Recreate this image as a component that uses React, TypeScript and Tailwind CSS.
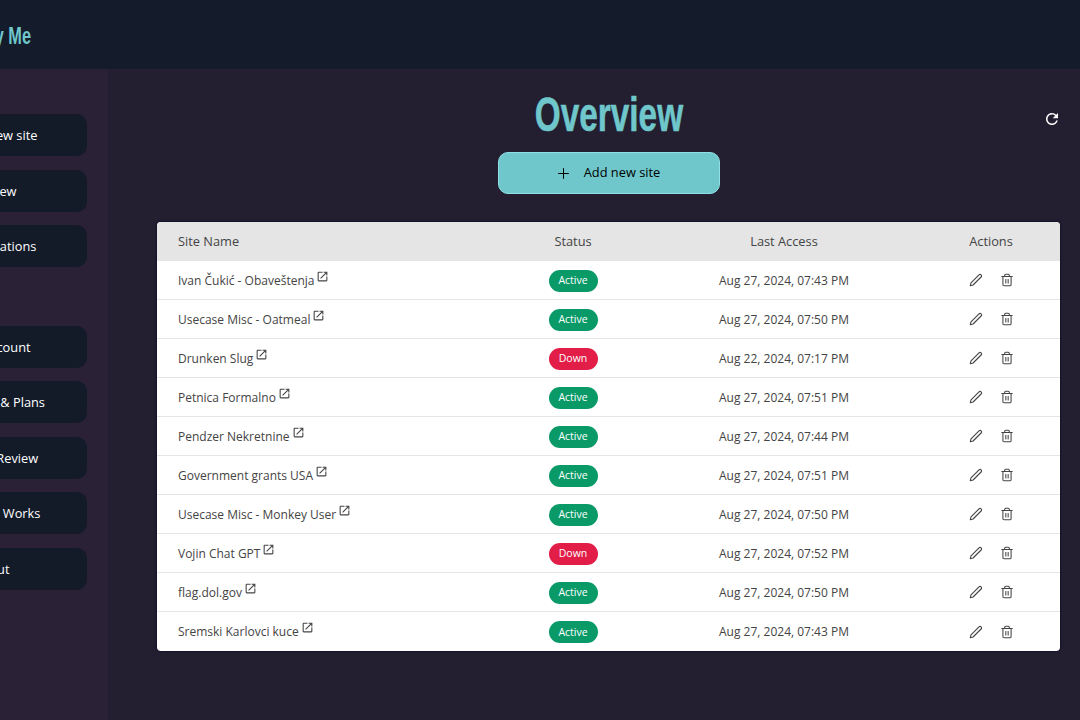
import { Plus, Trash2 } from "lucide-react"
import { MdOpenInNew, MdRefresh } from "react-icons/md"

const menuTop = ["Add new site", "Overview", "Notifications"]
const menuBottom = ["My Account", "Billing & Plans", "Write Review", "How It Works", "Sign out"]

const sites = [
    { name: "Ivan Čukić - Obaveštenja", status: "Active", access: "Aug 27, 2024, 07:43 PM" },
    { name: "Usecase Misc - Oatmeal", status: "Active", access: "Aug 27, 2024, 07:50 PM" },
    { name: "Drunken Slug", status: "Down", access: "Aug 22, 2024, 07:17 PM" },
    { name: "Petnica Formalno", status: "Active", access: "Aug 27, 2024, 07:51 PM" },
    { name: "Pendzer Nekretnine", status: "Active", access: "Aug 27, 2024, 07:44 PM" },
    { name: "Government grants USA", status: "Active", access: "Aug 27, 2024, 07:51 PM" },
    { name: "Usecase Misc - Monkey User", status: "Active", access: "Aug 27, 2024, 07:50 PM" },
    { name: "Vojin Chat GPT", status: "Down", access: "Aug 27, 2024, 07:52 PM" },
    { name: "flag.dol.gov", status: "Active", access: "Aug 27, 2024, 07:50 PM" },
    { name: "Sremski Karlovci kuce", status: "Active", access: "Aug 27, 2024, 07:43 PM" },
]

function MenuButton({ label }: { label: string }) {
    return (
        <button className="flex h-[42px] w-full items-center rounded-[10px] bg-[#131b29] pl-[113px] pt-[2px] text-[12.8px] text-white">
            {label}
        </button>
    )
}

function PencilIcon() {
    return (
        <svg width="14" height="14" viewBox="0 0 14 14" fill="none" stroke="currentColor" strokeWidth="1.1" strokeLinejoin="round">
            <path d="M1.3 12.7 L2 9.9 L10 1.9 C10.7 1.2 11.5 1.2 12.1 1.9 C12.8 2.5 12.8 3.3 12.1 4 L4.1 12 Z" />
        </svg>
    )
}

export default function App() {
    return (
        <div className="h-[720px] w-[1080px] overflow-hidden bg-[#231e30] font-['Open_Sans',sans-serif]">
            <div className="-ml-[192px] flex h-full w-[1272px] flex-col">
                <header className="flex h-[69px] shrink-0 items-center justify-end bg-[#141b2a] pr-[1049px] pt-[3px]">
                    <span className="origin-right scale-x-[0.68] font-['Liberation_Sans',sans-serif] text-[24px] font-bold whitespace-nowrap text-[#6fc7cb]">Notify Me</span>
                </header>
                <div className="flex flex-1">
                    <aside className="flex w-[300px] shrink-0 flex-col gap-[13.5px] bg-[#2a2136] pl-[40px] pr-[21px] pt-[45px]">
                        {menuTop.map((m) => <MenuButton key={m} label={m} />)}
                        <div className="h-[31.5px]" />
                        {menuBottom.map((m) => <MenuButton key={m} label={m} />)}
                    </aside>
                    <main className="relative flex flex-1 flex-col items-center pl-[49px] pr-[20px]">
                        <h1 className="mt-[19px] scale-x-[0.68] font-['Liberation_Sans',sans-serif] text-[49px] font-bold leading-[52px] text-[#6fc7cb] [-webkit-text-stroke:0.6px_#6fc7cb]">Overview</h1>
                        <button className="mt-[12px] flex h-[42px] w-[222px] items-center justify-center gap-[12px] rounded-[10px] border border-[#8fe0e4] bg-[#6fc7cb] pr-[2px] text-[12.8px] text-black">
                            <Plus size={17} strokeWidth={1.4} />
                            Add new site
                        </button>
                        <MdRefresh size={18} className="absolute right-[19px] top-[41px] text-white" />
                        <div className="mt-[28px] w-full overflow-hidden rounded-[4px] bg-white text-[12px] text-[#444] shadow-[0_0_2px_1px_#14142a]">
                            <div className="grid h-[39px] grid-cols-[343px_146px_276px_138px] items-center bg-[#e5e5e5] text-[12.8px]">
                                <div className="pl-[21px]">Site Name</div>
                                <div className="text-center">Status</div>
                                <div className="text-center">Last Access</div>
                                <div className="text-center">Actions</div>
                            </div>
                            {sites.map((s, i) => (
                                <div key={s.name} className={i === 9 ? "grid h-[39px] grid-cols-[343px_146px_276px_138px] items-center pt-[1px]" : "grid h-[39px] grid-cols-[343px_146px_276px_138px] items-center border-b border-[#e5e5e5] pt-[1px]"}>
                                    <div className="flex pl-[21px]">
                                        {s.name}
                                        <MdOpenInNew size={13} className="-mt-[2px] ml-[2px] text-[#444]" />
                                    </div>
                                    <div className="flex justify-center">
                                        <span className={s.status === "Active" ? "flex h-[22px] w-[49px] items-center justify-center rounded-full bg-[#0a9a68] pt-[1px] text-[10.5px] text-white" : "flex h-[22px] w-[49px] items-center justify-center rounded-full bg-[#e11d48] pt-[1px] text-[10.5px] text-white"}>{s.status}</span>
                                    </div>
                                    <div className="text-center">{s.access}</div>
                                    <div className="-mt-[1px] flex items-center justify-center gap-[17px]">
                                        <PencilIcon />
                                        <Trash2 size={14} strokeWidth={1.8} />
                                    </div>
                                </div>
                            ))}
                        </div>
                    </main>
                </div>
            </div>
        </div>
    )
}
